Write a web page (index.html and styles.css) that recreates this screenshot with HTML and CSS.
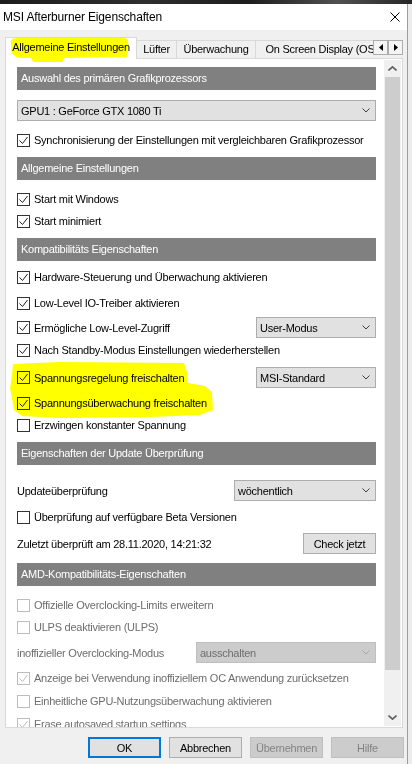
FILE: index.html
```html
<!DOCTYPE html>
<html lang="de">
<head>
    <meta charset="UTF-8">
    <meta name="viewport" content="width=device-width, initial-scale=1.0">
    <title>MSI Afterburner Eigenschaften</title>
    <link rel="stylesheet" href="styles.css">
</head>
<body>
    <div class="desktop"></div>

    <div class="window">
        <div class="titlebar">
            <span class="title">MSI Afterburner Eigenschaften</span>
            <svg class="close" viewBox="0 0 10 10"><path d="M0.5 0.5 L9.5 9.5 M9.5 0.5 L0.5 9.5"/></svg>
        </div>

        <div class="tab-strip">
            <div class="tab-list">
                <div class="tab active">Allgemeine Einstellungen</div>
                <div class="tab t-fan">Lüfter</div>
                <div class="tab t-mon">Überwachung</div>
                <div class="tab t-osd">On Screen Display (OSD)</div>
            </div>
            <div class="tab-scroll"><svg viewBox="0 0 4 7"><path d="M4 0 L0 3.5 L4 7 Z"/></svg></div>
            <div class="tab-scroll"><svg viewBox="0 0 4 7"><path d="M0 0 L4 3.5 L0 7 Z"/></svg></div>
        </div>

        <div class="panel">
            <div class="page">
                <div class="section">Auswahl des primären Grafikprozessors</div>
                <div class="combo full mt10">
                    <span>GPU1 : GeForce GTX 1080 Ti</span>
                    <svg class="chev" viewBox="0 0 8 5"><path d="M0.5 0.5 L4 4 L7.5 0.5"/></svg>
                </div>
                <div class="row mt9">
                    <label class="check"><span class="box"><svg viewBox="0 0 13 13"><path d="M2.5 6.5 L5.5 9.5 L10.5 3"/></svg></span>Synchronisierung der Einstellungen mit vergleichbaren Grafikprozessor</label>
                </div>

                <div class="section mt7">Allgemeine Einstellungen</div>
                <div class="row mt9">
                    <label class="check"><span class="box"><svg viewBox="0 0 13 13"><path d="M2.5 6.5 L5.5 9.5 L10.5 3"/></svg></span>Start mit Windows</label>
                </div>
                <div class="row mt2">
                    <label class="check"><span class="box"><svg viewBox="0 0 13 13"><path d="M2.5 6.5 L5.5 9.5 L10.5 3"/></svg></span>Start minimiert</label>
                </div>

                <div class="section mt7">Kompatibilitäts Eigenschaften</div>
                <div class="row mt6">
                    <label class="check"><span class="box"><svg viewBox="0 0 13 13"><path d="M2.5 6.5 L5.5 9.5 L10.5 3"/></svg></span>Hardware-Steuerung und Überwachung aktivieren</label>
                </div>
                <div class="row mt6">
                    <label class="check"><span class="box"><svg viewBox="0 0 13 13"><path d="M2.5 6.5 L5.5 9.5 L10.5 3"/></svg></span>Low-Level IO-Treiber aktivieren</label>
                </div>
                <div class="row tall mt4">
                    <label class="check"><span class="box"><svg viewBox="0 0 13 13"><path d="M2.5 6.5 L5.5 9.5 L10.5 3"/></svg></span>Ermögliche Low-Level-Zugriff</label>
                    <div class="combo w120">
                        <span>User-Modus</span>
                        <svg class="chev" viewBox="0 0 8 5"><path d="M0.5 0.5 L4 4 L7.5 0.5"/></svg>
                    </div>
                </div>
                <div class="row mt2">
                    <label class="check"><span class="box"><svg viewBox="0 0 13 13"><path d="M2.5 6.5 L5.5 9.5 L10.5 3"/></svg></span>Nach Standby-Modus Einstellungen wiederherstellen</label>
                </div>
                <div class="row tall mt7">
                    <label class="check"><span class="box"><svg viewBox="0 0 13 13"><path d="M2.5 6.5 L5.5 9.5 L10.5 3"/></svg></span>Spannungsregelung freischalten</label>
                    <div class="combo w120">
                        <span>MSI-Standard</span>
                        <svg class="chev" viewBox="0 0 8 5"><path d="M0.5 0.5 L4 4 L7.5 0.5"/></svg>
                    </div>
                </div>
                <div class="row mt5">
                    <label class="check"><span class="box"><svg viewBox="0 0 13 13"><path d="M2.5 6.5 L5.5 9.5 L10.5 3"/></svg></span>Spannungsüberwachung freischalten</label>
                </div>
                <div class="row mt2">
                    <label class="check"><span class="box"></span>Erzwingen konstanter Spannung</label>
                </div>

                <div class="section mt7">Eigenschaften der Update Überprüfung</div>
                <div class="row tall mt15">
                    <span>Updateüberprüfung</span>
                    <div class="combo w142">
                        <span>wöchentlich</span>
                        <svg class="chev" viewBox="0 0 8 5"><path d="M0.5 0.5 L4 4 L7.5 0.5"/></svg>
                    </div>
                </div>
                <div class="row mt6">
                    <label class="check"><span class="box"></span>Überprüfung auf verfügbare Beta Versionen</label>
                </div>
                <div class="row tall mt6">
                    <span>Zuletzt überprüft am 28.11.2020, 14:21:32</span>
                    <button class="btn" type="button">Check jetzt</button>
                </div>

                <div class="section mt9">AMD-Kompatibilitäts-Eigenschaften</div>
                <div class="row disabled mt9">
                    <label class="check"><span class="box"></span>Offizielle Overclocking-Limits erweitern</label>
                </div>
                <div class="row disabled mt2">
                    <label class="check"><span class="box"></span>ULPS deaktivieren (ULPS)</label>
                </div>
                <div class="row tall disabled mt5">
                    <span>inoffizieller Overclocking-Modus</span>
                    <div class="combo w180">
                        <span>ausschalten</span>
                        <svg class="chev" viewBox="0 0 8 5"><path d="M0.5 0.5 L4 4 L7.5 0.5"/></svg>
                    </div>
                </div>
                <div class="row disabled mt5">
                    <label class="check"><span class="box"><svg viewBox="0 0 13 13"><path d="M2.5 6.5 L5.5 9.5 L10.5 3"/></svg></span>Anzeige bei Verwendung inoffiziellem OC Anwendung zurücksetzen</label>
                </div>
                <div class="row disabled mt3">
                    <label class="check"><span class="box"></span>Einheitliche GPU-Nutzungsüberwachung aktivieren</label>
                </div>
                <div class="row disabled mt3">
                    <label class="check"><span class="box"><svg viewBox="0 0 13 13"><path d="M2.5 6.5 L5.5 9.5 L10.5 3"/></svg></span>Erase autosaved startup settings</label>
                </div>
            </div>

            <div class="scrollbar">
                <div class="sb-btn"><svg viewBox="0 0 9 5"><path d="M0.5 4.5 L4.5 0.8 L8.5 4.5"/></svg></div>
                <div class="thumb"></div>
                <div class="sb-btn bottom"><svg viewBox="0 0 9 5"><path d="M0.5 0.5 L4.5 4.2 L8.5 0.5"/></svg></div>
            </div>
        </div>

        <div class="buttons">
            <button class="btn default" type="button">OK</button>
            <button class="btn" type="button">Abbrechen</button>
            <button class="btn" type="button" disabled>Übernehmen</button>
            <button class="btn" type="button" disabled>Hilfe</button>
        </div>
    </div>

    <!-- marker strokes over the dialog -->
    <svg class="marker" viewBox="0 0 412 764">
        <path d="M11 42 C11 39 13 38 18 38 L124 38 C128 38 129 41 128 46 L127 57 L64 58 L63 62 L33 62 L31 58 L20 58 C14 57 11 53 11 48 Z"/>
        <path d="M13 364 L60 362 L184 363 L187 372 L188 383 L205 386 L212 392 L213 410 L200 415 L150 417 L60 418 L22 416 L14 410 L12 398 L10 388 L12 375 Z"/>
    </svg>
</body>
</html>
```

FILE: styles.css
```css
body {
    margin: 0;
    background-color: #ececec;
    font-family: "Liberation Sans", Arial, sans-serif;
    font-size: 11px;
    letter-spacing: -0.25px;
    color: #000000;
    overflow: hidden;
}

.desktop {
    height: 4px;
    background: linear-gradient(90deg, #1c1c1c 0%, #2e2e2e 35%, #1d1d1d 60%, #505050 82%, #262626 100%);
}

.window {
    width: 408px;
    height: 760px;
    box-sizing: border-box;
    border-right: 1px solid #9c9c9c;
    background-color: #f0f0f0;
}

/* title bar */
.titlebar {
    height: 26px;
    background-color: #ffffff;
    display: flex;
    align-items: center;
    justify-content: space-between;
    padding: 0 7px 0 3px;
}

.title {
    font-size: 12px;
    letter-spacing: -0.15px;
}

.close {
    width: 10px;
    height: 10px;
    fill: none;
    stroke: #000000;
    stroke-width: 1;
}

/* tabs */
.tab-strip {
    display: flex;
    align-items: flex-end;
    height: 22px;
    margin-top: 7px;
    padding-left: 5px;
    position: relative;
    z-index: 1;
}

.tab-list {
    display: flex;
    align-items: flex-end;
    width: 368px;
    height: 22px;
    overflow: hidden;
}

.tab {
    flex-shrink: 0;
    box-sizing: border-box;
    height: 18px;
    line-height: 16px;
    margin-bottom: 1px;
    text-align: center;
    white-space: nowrap;
    background-color: #f0f0f0;
    border-top: 1px solid #d9d9d9;
    border-right: 1px solid #d9d9d9;
}

.tab.active {
    width: 132px;
    height: 22px;
    line-height: 19px;
    margin-bottom: 0;
    background-color: #ffffff;
    border-left: 1px solid #d9d9d9;
}

.t-fan { width: 40px; }
.t-mon { width: 79px; }
.t-osd { width: 140px; }

.tab-scroll {
    align-self: flex-start;
    margin-top: 3px;
    width: 15px;
    height: 15px;
    box-sizing: border-box;
    border: 1px solid #adadad;
    background-color: #f4f4f4;
    display: flex;
    align-items: center;
    justify-content: center;
}

.tab-scroll svg {
    width: 4px;
    height: 7px;
    fill: #000000;
}

/* tab page */
.panel {
    display: flex;
    margin: -1px 0 0 5px;
    width: 398px;
    height: 670px;
    box-sizing: border-box;
    border: 1px solid #d9d9d9;
    background-color: #ffffff;
}

.page {
    flex: 1;
    display: flex;
    flex-direction: column;
    padding: 8px 8px 0 11px;
    overflow: hidden;
}

.section {
    flex-shrink: 0;
    height: 23px;
    line-height: 23px;
    padding-left: 4px;
    background-color: #808080;
    color: #ffffff;
}

.row {
    flex-shrink: 0;
    display: flex;
    align-items: center;
    justify-content: space-between;
    height: 20px;
    white-space: nowrap;
}

.row.tall {
    height: 21px;
}

.check {
    display: flex;
    align-items: center;
    gap: 4px;
}

.box {
    width: 13px;
    height: 13px;
    box-sizing: border-box;
    border: 1px solid #333333;
    background-color: #ffffff;
    position: relative;
}

.box svg {
    position: absolute;
    left: -1px;
    top: -1px;
    width: 13px;
    height: 13px;
    fill: none;
    stroke: #222222;
    stroke-width: 1;
}

.combo {
    height: 21px;
    box-sizing: border-box;
    border: 1px solid #adadad;
    background-color: #e1e1e1;
    display: flex;
    align-items: center;
    justify-content: space-between;
    padding: 0 5px 0 3px;
}

.combo.full { flex-shrink: 0; }
.w120 { width: 120px; }
.w142 { width: 142px; }
.w180 { width: 180px; }

.chev {
    width: 8px;
    height: 5px;
    fill: none;
    stroke: #404040;
    stroke-width: 1;
}

.btn {
    width: 73px;
    height: 21px;
    padding: 0;
    box-sizing: border-box;
    border: 1px solid #adadad;
    background-color: #e1e1e1;
    font-family: inherit;
    font-size: 11px;
    letter-spacing: -0.25px;
    color: #000000;
}

.btn.default {
    border: 2px solid #0078d7;
}

.btn:disabled {
    background-color: #cccccc;
    border-color: #bfbfbf;
    color: #838383;
}

/* greyed out AMD options */
.disabled {
    color: #6d6d6d;
}

.disabled .box {
    border-color: #bcbcbc;
}

.disabled .box svg {
    stroke: #bcbcbc;
}

.disabled .combo {
    background-color: #cccccc;
    border-color: #bfbfbf;
}

.disabled .chev {
    stroke: #a8a8a8;
}

/* scrollbar */
.scrollbar {
    width: 17px;
    margin: 1px 1px 1px 0;
    background-color: #f0f0f0;
    display: flex;
    flex-direction: column;
    align-items: center;
}

.sb-btn {
    height: 17px;
    width: 17px;
    display: flex;
    align-items: center;
    justify-content: center;
}

.sb-btn.bottom {
    margin-top: auto;
}

.sb-btn svg {
    width: 9px;
    height: 5px;
    fill: none;
    stroke: #606060;
    stroke-width: 1.6;
}

.thumb {
    width: 15px;
    height: 593px;
    background-color: #cdcdcd;
}

/* dialog buttons */
.buttons {
    display: flex;
    justify-content: flex-end;
    gap: 8px;
    padding: 9px 3px 0 0;
}

.marker {
    position: absolute;
    top: 0;
    left: 0;
    z-index: 2;
    width: 412px;
    height: 764px;
    pointer-events: none;
    mix-blend-mode: multiply;
    fill: #ffff00;
}

.mt2 { margin-top: 2px; }
.mt3 { margin-top: 3px; }
.mt4 { margin-top: 4px; }
.mt5 { margin-top: 5px; }
.mt6 { margin-top: 6px; }
.mt7 { margin-top: 7px; }
.mt9 { margin-top: 9px; }
.mt10 { margin-top: 10px; }
.mt15 { margin-top: 15px; }
```
